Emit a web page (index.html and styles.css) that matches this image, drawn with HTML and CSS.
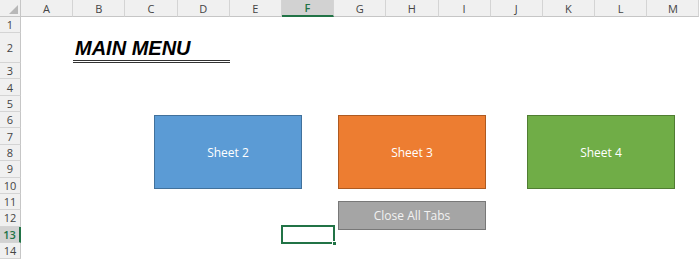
FILE: index.html
```html
<!DOCTYPE html>
<html lang="en">
<head>
    <meta charset="UTF-8">
    <meta name="viewport" content="width=device-width, initial-scale=1.0">
    <title>Main Menu</title>
    <link rel="stylesheet" href="styles.css">
</head>
<body>

    <div class="sheet">
        <div class="grid" id="grid"></div>

        <div class="title">MAIN MENU</div>

        <button class="shape blue" style="left:154px; top:115px; width:148px; height:74px;">Sheet 2</button>
        <button class="shape orange" style="left:338px; top:115px; width:148px; height:74px;">Sheet 3</button>
        <button class="shape green" style="left:527px; top:115px; width:148px; height:74px;">Sheet 4</button>
        <button class="shape grey" style="left:338px; top:201px; width:148px; height:29px;">Close All Tabs</button>
    </div>

    <script>
        const cols = ['A','B','C','D','E','F','G','H','I','J','K','L','M'];
        const grid = document.getElementById('grid');

        function cell(cls, text) {
            const div = document.createElement('div');
            div.className = cls;
            if (text) div.textContent = text;
            grid.appendChild(div);
            return div;
        }

        const corner = cell('corner');
        corner.innerHTML = '<svg width="10" height="10" viewBox="0 0 10 10"><polygon points="10,1 10,10 1,10" fill="#b8b8b8"/></svg>';

        cols.forEach(c => cell(c === 'F' ? 'colhead active' : 'colhead', c));

        for (let r = 1; r <= 14; r++) {
            cell(r === 13 ? 'rowhead active' : 'rowhead', String(r));
            cols.forEach(c => {
                let cls = 'cell';
                if (r === 2 && (c === 'B' || c === 'C' || c === 'D')) cls += ' dbl';
                if (r === 13 && c === 'F') cls += ' sel';
                cell(cls);
            });
        }
    </script>
</body>
</html>
```

FILE: styles.css
```css
body {
    margin: 0;
    padding: 0;
    background-color: #ffffff;
    font-family: "Open Sans", "Liberation Sans", sans-serif;
    overflow: hidden;
}

.sheet {
    position: relative;
    width: 700px;
    height: 259px;
    overflow: hidden;
}

.grid {
    display: grid;
    grid-template-columns: 21px repeat(13, 52.2px);
    grid-template-rows: 17px 16px 30px repeat(12, 16.36px);
}

.grid > div {
    box-sizing: border-box;
}

.corner {
    background-color: #f0f0f0;
    display: flex;
    align-items: flex-end;
    justify-content: flex-end;
    padding: 0 2px 2px 0;
    border-right: 1px solid #c6c6c6;
    border-bottom: 1px solid #c6c6c6;
}

.colhead, .rowhead {
    background-color: #f0f0f0;
    color: #444;
    font-size: 11px;
    display: flex;
    align-items: center;
    justify-content: center;
    line-height: 1;
}

.colhead {
    border-right: 1px solid #d4d4d4;
    border-bottom: 1px solid #c6c6c6;
}

.rowhead {
    border-right: 1px solid #c6c6c6;
    border-bottom: 1px solid #d4d4d4;
}

.colhead.active {
    background-color: #d2d2d2;
    color: #217346;
    font-weight: 600;
    border-bottom: 2px solid #217346;
}

.rowhead.active {
    background-color: #d2d2d2;
    color: #217346;
    font-weight: 600;
    border-right: 2px solid #217346;
}

.cell.dbl {
    border-bottom: 3px double #333;
}

.cell.sel {
    position: relative;
}

.cell.sel::before {
    content: "";
    position: absolute;
    left: -1px;
    top: -2px;
    right: -1px;
    bottom: -1px;
    border: 2px solid #217346;
}

.cell.sel::after {
    content: "";
    position: absolute;
    right: -3px;
    bottom: -3px;
    width: 5px;
    height: 5px;
    background-color: #217346;
    border: 1px solid #fff;
    box-sizing: border-box;
}

.title {
    position: absolute;
    left: 75px;
    top: 37px;
    font-family: "Liberation Sans", Arial, sans-serif;
    font-size: 20px;
    font-weight: bold;
    font-style: italic;
    color: #000;
    line-height: 22px;
}

.shape {
    position: absolute;
    box-sizing: border-box;
    margin: 0;
    padding: 0;
    color: #fff;
    font-family: "Open Sans", "Liberation Sans", sans-serif;
    font-size: 12px;
    display: flex;
    align-items: center;
    justify-content: center;
    cursor: pointer;
}

.blue {
    background-color: #5b9bd5;
    border: 1px solid #41719c;
}

.orange {
    background-color: #ed7d31;
    border: 1px solid #ae5a21;
}

.green {
    background-color: #70ad47;
    border: 1px solid #507e32;
}

.grey {
    background-color: #a5a5a5;
    border: 1px solid #787878;
    color: #f2f2f2;
}
```
